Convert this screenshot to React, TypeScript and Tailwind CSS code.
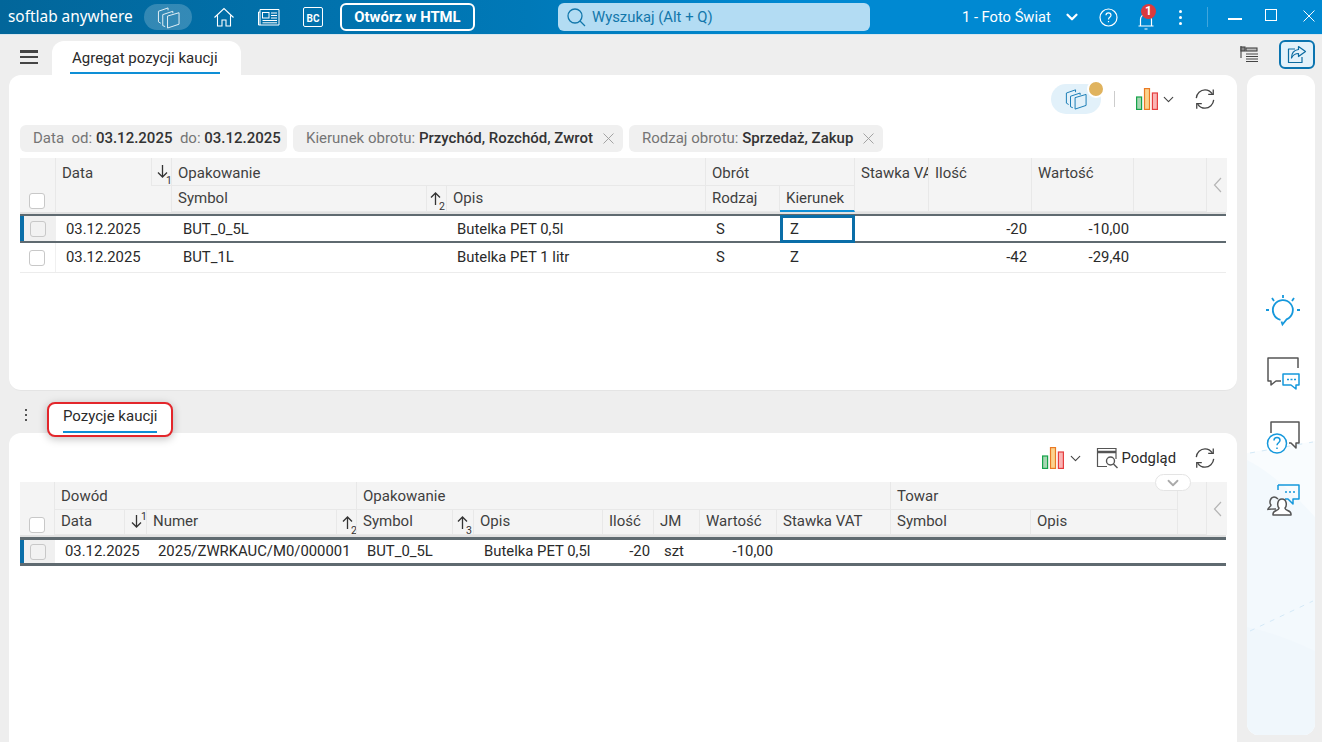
import React from 'react';
import { ChevronDown } from 'lucide-react';

const Panels = ({ color = 'currentColor', className = '' }: { color?: string; className?: string }) => (
  <svg viewBox="0 0 24 24" className={className} fill="none" stroke={color} strokeWidth="1" strokeLinejoin="round">
    <path d="M11 10.500l12-3.500v12l-12 4z" />
    <path d="M8.500 21.500L6 20.500V9l10.500-3.500V7.500" />
    <path d="M4 18L1.500 16.500V5.500L11.500 2v2.500" />
  </svg>
);

const CloseX = ({ color, size = 11 }: { color: string; size?: number }) => (
  <svg width={size} height={size} viewBox="0 0 11 11" fill="none" stroke={color} strokeWidth="0.9" className="shrink-0">
    <path d="M.5.500l10 10M10.500.500l-10 10" />
  </svg>
);

const Chart = () => (
  <svg width="22" height="22" viewBox="0 0 22 22" className="shrink-0">
    <rect x="0.600" y="9" width="5" height="12.400" fill="#a6d6b2" stroke="#16a34a" strokeWidth="1.200" />
    <rect x="8.500" y="0.600" width="5" height="20.800" fill="#fbd38d" stroke="#ea7a24" strokeWidth="1.200" />
    <rect x="16.400" y="5" width="5" height="16.400" fill="#fbb4b4" stroke="#e53e3e" strokeWidth="1.200" />
  </svg>
);

const Refresh = () => (
  <svg width="22" height="22" viewBox="0 0 24 24" fill="none" stroke="#444" strokeWidth="1.400" className="shrink-0">
    <path d="M2.500 11C3 6 7 2 12 2c3.500 0 6 1.500 8 4.500" />
    <path d="M21 1.500v5.500h-5.500" />
    <path d="M21.500 13c-.5 5-4.500 9-9.500 9-3.500 0-6-1.500-8-4.500" />
    <path d="M3 22.500V17h5.500" />
  </svg>
);

const Check = ({ grey }: { grey?: boolean }) => (
  <span className={`block w-[16px] h-[16px] rounded-[3px] border border-[#c8c8c8] shrink-0 ${grey ? 'bg-[#f2f2f2]' : 'bg-white'}`} />
);

const SortArrow = ({ dir, n, x, y, nx, ny }: { dir: 'up' | 'down'; n: number; x: string; y: string; nx: string; ny: string }) => (
  <span className="relative block h-full w-full">
    <svg width="11" height="13" viewBox="0 0 11 13" fill="none" stroke="#333" strokeWidth="1.300" className={`absolute ${x} ${y}`}>
      {dir === 'down' ? <path d="M5.500 0v12M1 7.500L5.500 12 10 7.500" /> : <path d="M5.500 13V1M1 5.500L5.500 1 10 5.500" />}
    </svg>
    <span className={`absolute ${nx} ${ny} text-[10.500px] leading-none font-normal text-[#333]`}>{n}</span>
  </span>
);

const Chip = ({ children, w }: { children: React.ReactNode; w: string }) => (
  <div className={`${w} h-[27px] rounded-md bg-[#f0f0f0] flex items-center pl-[13px] text-[15px] text-[#757575] whitespace-nowrap`}>
    {children}
  </div>
);

const B = ({ children }: { children: React.ReactNode }) => <b className="font-medium text-[#333]">{children}</b>;

const Th = ({ children, className = '' }: { children?: React.ReactNode; className?: string }) => (
  <div className={`bg-[#f4f4f4] border-r border-b border-[#e8e8e8] pl-[6px] text-[15px] leading-[20px] font-[450] text-[#3f3f3f] whitespace-nowrap overflow-hidden ${className}`}>
    {children}
  </div>
);

const ArrowCell = ({ className = '' }: { className?: string }) => (
  <div className={`bg-[#f4f4f4] flex items-center justify-center ${className}`}>
    <svg width="9" height="16" viewBox="0 0 9 16" fill="none" stroke="#b5b5b5" strokeWidth="1.200"><path d="M8 1L1.500 8 8 15" /></svg>
  </div>
);

const cols1 = 'grid-cols-[36px_96px_20px_255px_20px_259px_74px_75px_74px_103px_102px_73px_20px]';
const cols2 = 'grid-cols-[35px_70px_22px_190px_20px_96px_21px_129px_51px_46px_77px_114px_140px_147px_29px_20px]';

const Row1 = ({ s, o, q, v, active }: { s: string; o: string; q: string; v: string; active?: boolean }) => (
  <div className={`grid ${cols1} text-[14.85px] text-[#2a2a2a] bg-white ${active ? 'h-[29px] border-y-[2px] border-y-[#5f6a70]' : 'h-[30px] border-b border-[#ececec]'}`}>
    <div className={active ? 'flex items-center justify-center pr-[5px] bg-[#f0f0f0] border-l-[4px] border-l-[#0a6ea8]' : 'flex items-center justify-center pr-[1px] border-r border-[#f0f0f0]'}>
      <Check grey={active} />
    </div>
    <div className="col-span-2 flex items-center pl-[10px]">03.12.2025</div>
    <div className="col-span-2 flex items-center pl-[11px]">{s}</div>
    <div className="flex items-center pl-[10px]">{o}</div>
    <div className="flex items-center pl-[10px]">S</div>
    <div className={active ? 'relative z-10 flex items-center border-[3px] border-[#0a6ea8] pl-[7px] -mt-[1px] -mb-[2px]' : 'flex items-center pl-[10px]'}>Z</div>
    <div />
    <div className="flex items-center justify-end pr-[5px]">{q}</div>
    <div className="flex items-center justify-end pr-[5px]">{v}</div>
    <div className="col-span-2" />
  </div>
);

export default function App() {
  return (
    <div className="w-[1322px] h-[742px] overflow-hidden bg-[#eeeeee] flex flex-col font-['Roboto',sans-serif]">
      {/* top bar */}
      <header className="h-[35px] shrink-0 flex items-center text-white bg-gradient-to-r from-[#02669a] via-[#0079b8] via-40% to-[#0089d2] to-60% border-b border-[#d8e6ee]">
        <span className="ml-[8px] w-[125px] font-['Noto_Sans',sans-serif] text-[15.400px] whitespace-nowrap">softlab anywhere</span>
        <div className="ml-[11px] w-[48px] h-[26px] rounded-full bg-[#ffffff33] flex items-center justify-center">
          <Panels className="w-[23px] h-[23px]" color="#e8f2f8" />
        </div>
        <svg className="ml-[21px]" width="22" height="22" viewBox="0 0 22 22" fill="none" stroke="#fff" strokeWidth="1.100">
          <path d="M1.500 11.500L11 2.500l9.500 9M4.500 9.500V20h4.500v-6h4v6h4.500V9.500" />
        </svg>
        <svg className="ml-[22px]" width="23" height="20" viewBox="0 0 23 20" fill="none" stroke="#fff" strokeWidth="1">
          <path d="M3 2.500h19V18H1.500V5H3zM3 5v13" />
          <rect x="5.500" y="5.500" width="6.500" height="5.500" />
          <path d="M14 6h6M14 8.500h6M14 11h6M5.500 13.500H20M5.500 15.800H20" />
        </svg>
        <div className="ml-[23px] w-[20px] h-[20px] rounded-[2px] border border-white flex items-end justify-center text-[10px] font-bold leading-[12px] pb-[1px]">BC</div>
        <div className="ml-[17px] w-[135px] h-[28px] rounded-md border-2 border-white flex items-center justify-center text-[14.85px] font-bold whitespace-nowrap">Otwórz w HTML</div>
        <div className="ml-[83px] w-[312px] h-[28px] rounded-md bg-[#b3dcf3] flex items-center pl-[8px] text-[14.85px] text-[#1277ab]">
          <svg width="20" height="20" viewBox="0 0 20 20" fill="none" stroke="#1277ab" strokeWidth="1.300">
            <circle cx="9" cy="9" r="7" />
            <path d="M14 14l5 5" />
          </svg>
          <span className="ml-[6px]">Wyszukaj (Alt + Q)</span>
        </div>
        <span className="ml-[92px] w-[88px] text-[14.700px] whitespace-nowrap">1 - Foto Świat</span>
        <ChevronDown className="ml-[13px] -mr-[1px]" size={18} strokeWidth={3} />
        <svg className="ml-[19px]" width="19" height="19" viewBox="0 0 19 19" fill="none" stroke="#fff" strokeWidth="1.200">
          <circle cx="9.500" cy="9.500" r="8.500" />
          <path d="M7 7.300c0-1.500 1.100-2.400 2.500-2.400s2.500.9 2.500 2.300c0 2.100-2.500 2-2.500 4.200M9.500 13v1.300" />
        </svg>
        <div className="relative ml-[19px] w-[18px] h-[20px]">
          <svg width="18" height="20" viewBox="0 0 18 20" fill="none" stroke="#fff" strokeWidth="1.200" className="mt-[4px]">
            <path d="M1.500 15h15M3.500 15V8.500c0-3 2.400-5.500 5.500-5.500s5.500 2.500 5.500 5.500V15M7.500 18h3" />
          </svg>
          <span className="absolute -top-[3px] left-[4px] w-[15px] h-[15px] rounded-full bg-[#d93a3e] text-[12px] leading-[15px] font-bold text-center">1</span>
        </div>
        <div className="ml-[24px] flex flex-col gap-[3px]">
          <span className="w-[3px] h-[3px] bg-white rounded-full" />
          <span className="w-[3px] h-[3px] bg-white rounded-full" />
          <span className="w-[3px] h-[3px] bg-white rounded-full" />
        </div>
        <span className="ml-[25px] w-px h-[20px] bg-[#ffffff40]" />
        <span className="ml-[20px] w-[14px] h-[2px] bg-white mt-[4px]" />
        <span className="ml-[23px] w-[12px] h-[12px] border border-white -mt-[5px]" />
        <span className="ml-[26px] -mt-[3px]"><CloseX color="#fff" size={12} /></span>
      </header>

      <div className="flex-1 min-h-0 flex">
        {/* main column */}
        <div className="w-[1238px] shrink-0 flex flex-col">
          <div className="h-[40px] shrink-0 flex items-end pl-[20px]">
            <div className="w-[18px] h-[14px] mb-[11px] flex flex-col justify-between">
              <span className="h-[2.500px] bg-[#444]" />
              <span className="h-[2.500px] bg-[#444]" />
              <span className="h-[2.500px] bg-[#444]" />
            </div>
            <div className="ml-[14px] w-[189px] h-[34px] bg-white rounded-t-xl pl-[18px] pt-[6px] text-[15px] font-[450] text-[#2a2a2a]">
              <span className="inline-block pb-[2px] border-b-[2px] border-[#0e8fd6] px-[2px]">Agregat pozycji kaucji</span>
            </div>
          </div>

          {/* upper panel */}
          <section className="ml-[9px] mr-[1px] h-[316px] shrink-0 bg-white rounded-xl border-b border-[#e4e4e4] px-[11px] pt-[9px]">
            <div className="h-[30px] flex items-center justify-end pr-[10px]">
              <div className="relative w-[50px] h-[30px] rounded-full bg-[#e2f1fa] flex items-center justify-center">
                <Panels className="w-[22px] h-[22px]" color="#0a74b0" />
                <span className="absolute -top-[4px] -right-[4px] w-[14px] h-[14px] rounded-full bg-[#e0b35e] border-2 border-white box-content" />
              </div>
              <span className="ml-[13px] w-px h-[16px] bg-[#cccccc]" />
              <div className="ml-[21px]"><Chart /></div>
              <ChevronDown className="ml-[2px]" size={17} color="#444" strokeWidth={1.600} />
              <div className="ml-[17px]"><Refresh /></div>
            </div>
            <div className="mt-[11px] flex gap-[6px]">
              <Chip w="w-[267px]"><span>Data&nbsp; od:&nbsp;</span><B>03.12.2025</B><span>&nbsp; do:&nbsp;</span><B>03.12.2025</B></Chip>
              <Chip w="w-[330px]"><span>Kierunek obrotu:&nbsp;</span><B>Przychód, Rozchód, Zwrot</B><span className="ml-[10px]"><CloseX color="#9a9a9a" /></span></Chip>
              <Chip w="w-[254px]"><span>Rodzaj obrotu:&nbsp;</span><B>Sprzedaż, Zakup</B><span className="ml-[10px]"><CloseX color="#9a9a9a" /></span></Chip>
            </div>
            <div className={`mt-[6px] grid ${cols1} grid-rows-[28px_26px] border-b-2 border-[#e2e2e2]`}>
              <div className="row-span-2 bg-[#f4f4f4] border-r border-[#e8e8e8] flex items-end justify-center pb-[3px] pr-[1px]"><Check /></div>
              <Th className="pt-[5px] !border-b-0">Data</Th>
              <Th className="!pl-0"><SortArrow dir="down" n={1} x="left-[5px]" y="top-[7px]" nx="left-[14px]" ny="top-[18px]" /></Th>
              <Th className="col-span-3 pt-[5px]">Opakowanie</Th>
              <Th className="col-span-2 pt-[5px]">Obrót</Th>
              <Th className="row-span-2 pt-[5px]">Stawka VAT</Th>
              <Th className="row-span-2 pt-[5px]">Ilość</Th>
              <Th className="row-span-2 pt-[5px]">Wartość</Th>
              <Th className="row-span-2" />
              <ArrowCell className="row-span-2" />
              <Th className="col-span-2 !border-b-0" />
              <Th className="pt-[2px]">Symbol</Th>
              <Th className="!pl-0"><SortArrow dir="up" n={2} x="left-[3px]" y="top-[6px]" nx="left-[12px]" ny="top-[16px]" /></Th>
              <Th className="pt-[2px]">Opis</Th>
              <Th className="pt-[2px]">Rodzaj</Th>
              <Th className="pt-[2px] !border-b-2 !border-b-[#0e8fd6]">Kierunek</Th>
            </div>
            <Row1 s="BUT_0_5L" o="Butelka PET 0,5l" q="-20" v="-10,00" active />
            <Row1 s="BUT_1L" o="Butelka PET 1 litr" q="-42" v="-29,40" />
          </section>

          <div className="h-[42px] shrink-0 flex items-end pl-[25px]">
            <div className="mb-[12px] flex flex-col gap-[3px]">
              <span className="w-[2px] h-[2px] bg-[#555]" />
              <span className="w-[2px] h-[2px] bg-[#555]" />
              <span className="w-[2px] h-[2px] bg-[#555]" />
            </div>
            <div className="relative z-10 ml-[20px] -mb-[4px] w-[126px] h-[35px] bg-white rounded-lg border-2 border-[#e3262b] shadow-[0_2px_8px_rgba(0,0,0,0.25)] pl-[14px] pt-[1px] text-[15px] font-[450] text-[#2a2a2a]">
              <span className="inline-block pb-[3px] border-b-[2px] border-[#0e8fd6]">Pozycje kaucji</span>
            </div>
          </div>

          {/* lower panel */}
          <section className="ml-[9px] mr-[1px] flex-1 bg-white rounded-t-xl px-[11px] pt-[10px]">
            <div className="relative h-[30px] flex items-center justify-end pr-[10px]">
              <Chart />
              <ChevronDown className="ml-[3px]" size={17} color="#444" strokeWidth={1.600} />
              <svg className="ml-[12px]" width="23" height="22" viewBox="0 0 23 22" fill="none" stroke="#555" strokeWidth="1.200">
                <path d="M20 12V1.500H1.500V19.500H11" />
                <path d="M1.500 5h18.500" strokeWidth="2.500" />
                <circle cx="14.500" cy="14" r="4" strokeWidth="1.400" />
                <path d="M17.500 17l4 4" strokeWidth="1.500" />
              </svg>
              <span className="ml-[3px] text-[14.85px] text-[#2a2a2a]">Podgląd</span>
              <div className="ml-[18px]"><Refresh /></div>
              <div className="absolute right-[35px] top-[31px] z-10 w-[36px] h-[17px] rounded-full bg-white border border-[#e4e4e4] flex items-center justify-center">
                <ChevronDown size={18} color="#aaaaaa" strokeWidth={2.400} />
              </div>
            </div>
            <div className={`mt-[9px] grid ${cols2} grid-rows-[28px_25px] border-b-2 border-[#e2e2e2]`}>
              <div className="row-span-2 bg-[#f4f4f4] border-r border-[#e8e8e8] flex items-end justify-center pb-[2px]"><Check /></div>
              <Th className="col-span-4 pt-[4px]">Dowód</Th>
              <Th className="col-span-7 pt-[4px]">Opakowanie</Th>
              <Th className="col-span-2 pt-[4px]">Towar</Th>
              <Th className="row-span-2" />
              <ArrowCell className="row-span-2" />
              <Th className="pt-[1px]">Data</Th>
              <Th className="!pl-0"><SortArrow dir="down" n={1} x="left-[6px]" y="top-[5px]" nx="left-[16px]" ny="top-[2px]" /></Th>
              <Th className="pt-[1px]">Numer</Th>
              <Th className="!pl-0"><SortArrow dir="up" n={2} x="left-[5px]" y="top-[6px]" nx="left-[14px]" ny="top-[16px]" /></Th>
              <Th className="pt-[1px]">Symbol</Th>
              <Th className="!pl-0"><SortArrow dir="up" n={3} x="left-[4px]" y="top-[6px]" nx="left-[13px]" ny="top-[16px]" /></Th>
              <Th className="pt-[1px]">Opis</Th>
              <Th className="pt-[1px]">Ilość</Th>
              <Th className="pt-[1px]">JM</Th>
              <Th className="pt-[1px]">Wartość</Th>
              <Th className="pt-[1px]">Stawka VAT</Th>
              <Th className="pt-[1px]">Symbol</Th>
              <Th className="pt-[1px]">Opis</Th>
            </div>
            <div className={`grid ${cols2} h-[29px] border-y-[3px] border-y-[#5f6a70] text-[14.85px] text-[#2a2a2a]`}>
              <div className="flex items-center justify-center pr-[4px] bg-[#f0f0f0] border-l-[4px] border-l-[#0a6ea8]"><Check grey /></div>
              <div className="col-span-2 flex items-center pl-[10px]">03.12.2025</div>
              <div className="col-span-2 flex items-center pl-[11px] whitespace-nowrap">2025/ZWRKAUC/M0/000001</div>
              <div className="col-span-2 flex items-center pl-[10px]">BUT_0_5L</div>
              <div className="flex items-center pl-[10px]">Butelka PET 0,5l</div>
              <div className="flex items-center justify-end pr-[4px]">-20</div>
              <div className="flex items-center pl-[10px]">szt</div>
              <div className="flex items-center justify-end pr-[4px]">-10,00</div>
            </div>
          </section>
        </div>

        {/* right rail */}
        <aside className="flex-1 min-w-0 flex flex-col">
          <div className="mt-[5px] h-[29px] mb-[6px] flex items-center pl-[2px] shrink-0">
            <svg width="19" height="18" viewBox="0 0 19 18" fill="none" stroke="#444" strokeWidth="1.100">
              <path d="M1 0v12" />
              <rect x="1" y="1" width="4" height="4" fill="#888" />
              <rect x="6" y="2" width="11" height="3" fill="#bbb" />
              <path d="M6 8h12M6 10.500h12M6 13h12M6 15.500h12" />
            </svg>
            <div className="ml-[20px] w-[36px] h-[29px] rounded-md border-2 border-[#0a74b0] bg-[#e2f1fa] flex items-center justify-center">
              <svg width="20" height="19" viewBox="0 0 20 19" fill="none" stroke="#0a6aa0" strokeWidth="1.200" strokeLinejoin="round">
                <path d="M8 4H1.500v13.500H15V12" />
                <path d="M11.500 1.500L18.500 6.500l-7 5V8.500C8 8.500 6 10 4.500 13c0-5 3-8 7-8.500z" />
              </svg>
            </div>
          </div>
          <div className="relative ml-[9px] w-[68px] flex-1 mb-[7px] rounded-xl bg-white overflow-hidden flex flex-col items-center pl-[4px]">
            <svg className="absolute inset-0" width="68" height="660" viewBox="0 0 68 660">
              <path d="M0 378L68 366V660H0z" fill="#f9fcfe" />
              <path d="M0 385Q30 400 68 442V660H0z" fill="#f3f9fd" />
              <path d="M0 552Q30 558 68 576V660H0z" fill="#f0f7fc" />
              <path d="M3 378L66 367" fill="none" stroke="#d4e9f7" strokeDasharray="5 7" strokeWidth="1" />
              <path d="M3 556L66 526" fill="none" stroke="#d4e9f7" strokeDasharray="5 6" strokeWidth="1" />
            </svg>
            <svg className="relative mt-[220px]" width="34" height="32" viewBox="0 0 34 32" fill="none" stroke="#1598dc" strokeWidth="1.800">
              <path d="M14.500 24.800A10 10 0 1 1 20.500 24.400L16.500 29.500l-1-3" />
              <path d="M17 0v3M6 3l2 3M28 3l-2 3M0 15h3M31 15h3" />
            </svg>
            <svg className="relative mt-[29px]" width="34" height="34" viewBox="0 0 34 34" fill="none" strokeWidth="1.500">
              <path d="M32 12V2H2v23h3v4l5-4h5" stroke="#555" strokeLinejoin="round" />
              <path d="M17 18h16v11h-3v4l-5-4h-8z" fill="#fff" stroke="#1598dc" strokeLinejoin="round" />
              <path d="M21 23.500h2M24.500 23.500h2M28 23.500h2" stroke="#1598dc" strokeWidth="1.500" />
            </svg>
            <svg className="relative mt-[31px]" width="34" height="34" viewBox="0 0 34 34" fill="none" strokeWidth="1.500">
              <path d="M5 12V1h28v21h-3v5l-5-5h-2" stroke="#555" strokeLinejoin="round" />
              <circle cx="11" cy="22.500" r="9.500" fill="#fff" stroke="#1598dc" />
              <path d="M8 19.500c0-2 1.300-3 3-3s3 1 3 2.800c0 2.500-3 2.400-3 5M11 26.500v1.500" stroke="#1598dc" />
            </svg>
            <svg className="relative mt-[29px]" width="34" height="34" viewBox="0 0 34 34" fill="none" strokeWidth="1.500">
              <path d="M12 1h21v14h-6v5l-5-5h-3M12 1v5" stroke="#1598dc" strokeLinejoin="round" />
              <path d="M19 8h2M23 8h2M27 8h2" stroke="#1598dc" strokeWidth="1.500" />
              <path d="M10 25c-4 0-8 0-8 1-1-2 3-3 3-5-2-2-1-8 3-8 2 0 3 1 4 2" stroke="#555" />
              <path d="M7 30c0-4 6-3 6-6-2-2-2-9 3-9s5 7 3 9c0 3 6 2 6 6v1H7z" fill="#fff" stroke="#555" strokeLinejoin="round" />
            </svg>
          </div>
        </aside>
      </div>
    </div>
  );
}
